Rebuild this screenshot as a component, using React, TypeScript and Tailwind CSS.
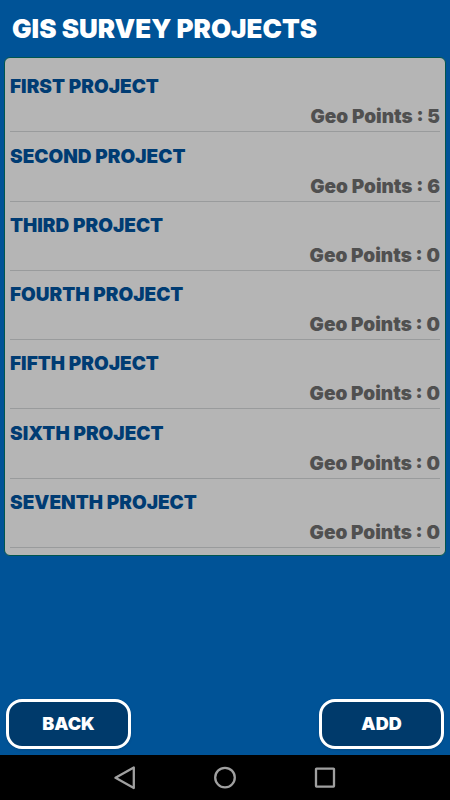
interface Project {
  name: string;
  points: number;
}

const projects: Project[] = [
  { name: "FIRST PROJECT", points: 5 },
  { name: "SECOND PROJECT", points: 6 },
  { name: "THIRD PROJECT", points: 0 },
  { name: "FOURTH PROJECT", points: 0 },
  { name: "FIFTH PROJECT", points: 0 },
  { name: "SIXTH PROJECT", points: 0 },
  { name: "SEVENTH PROJECT", points: 0 },
];

const ProjectRow = ({ name, points }: Project) => {
  return (
    <li className="flex flex-col justify-end border-b border-[#999b9c] pb-1">
      <h2 className="text-[19px] leading-6 font-black text-[#003c73]">{name}</h2>
      <p className="mt-2 text-right text-[19px] leading-5 font-black text-[#505050]">
        Geo Points : {points}
      </p>
    </li>
  );
};

const ActionButton = ({ label }: { label: string }) => {
  return (
    <button
      type="button"
      className="h-[50px] w-[125px] rounded-2xl border-3 border-white bg-[#003a6b] text-lg font-black text-white shadow-sm"
    >
      {label}
    </button>
  );
};

const NavBar = () => {
  return (
    <nav className="flex h-[45px] items-center justify-center gap-[76px] bg-black">
      <button type="button" aria-label="Back">
        <svg width="24" height="24" viewBox="0 0 24 24" fill="none" stroke="#a0a0a0" strokeWidth="2.3" strokeLinejoin="round">
          <path d="M20.8 1.5V22L2.5 11.8Z" />
        </svg>
      </button>
      <button type="button" aria-label="Home">
        <svg width="24" height="24" viewBox="0 0 24 24" fill="none" stroke="#a0a0a0" strokeWidth="2.3">
          <circle cx="12" cy="11.6" r="9.8" />
        </svg>
      </button>
      <button type="button" aria-label="Recent apps">
        <svg width="24" height="24" viewBox="0 0 24 24" fill="none" stroke="#a0a0a0" strokeWidth="2.3" strokeLinejoin="round">
          <rect x="3" y="2.6" width="18" height="18" rx="0.5" />
        </svg>
      </button>
    </nav>
  );
};

const App = () => {
  return (
    <div className="flex min-h-screen flex-col bg-[#005397] font-['Inter',sans-serif]">
      <header className="flex h-[57px] items-center px-3">
        <h1 className="text-[26px] leading-8 font-black whitespace-nowrap text-white">GIS SURVEY PROJECTS</h1>
      </header>
      <main className="flex-1 px-1">
        <ul className="grid min-h-[499px] auto-rows-fr rounded-md border border-[#00564f] bg-[#b5b5b5] px-[5px] pt-[5px] pb-[7px]">
          {projects.map((project) => (
            <ProjectRow key={project.name} name={project.name} points={project.points} />
          ))}
        </ul>
      </main>
      <footer className="flex justify-between px-1.5 pt-4 pb-1.5">
        <ActionButton label="BACK" />
        <ActionButton label="ADD" />
      </footer>
      <NavBar />
    </div>
  );
};

export default App;
